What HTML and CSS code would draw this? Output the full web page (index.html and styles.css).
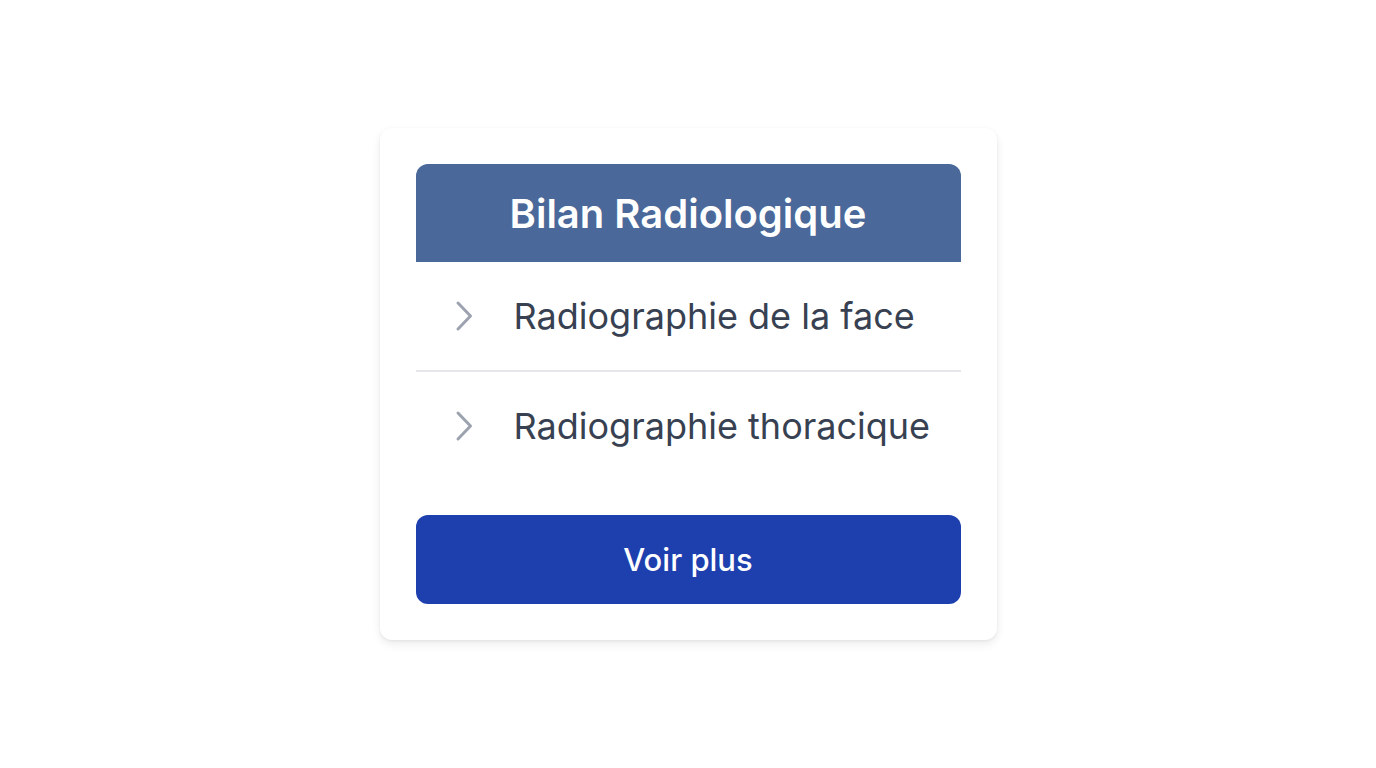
FILE: index.html
```html
<!DOCTYPE html>
<html lang="fr">
<head>
<meta charset="utf-8">
<title>Bilan Radiologique</title>
<link rel="stylesheet" href="styles.css">
</head>
<body>
<main class="page">
  <section class="card">
    <h2 class="card-header">Bilan Radiologique</h2>
    <ul class="list">
      <li class="item">
        <svg class="chev" viewBox="0 0 20 32" width="20" height="32"><path d="M4 3l12.5 13L4 29" fill="none" stroke="currentColor" stroke-width="3" stroke-linecap="round" stroke-linejoin="round"/></svg>
        <span>Radiographie de la face</span>
      </li>
      <li class="item">
        <svg class="chev" viewBox="0 0 20 32" width="20" height="32"><path d="M4 3l12.5 13L4 29" fill="none" stroke="currentColor" stroke-width="3" stroke-linecap="round" stroke-linejoin="round"/></svg>
        <span>Radiographie thoracique</span>
      </li>
    </ul>
    <button class="btn" type="button">Voir plus</button>
  </section>
</main>
</body>
</html>
```
FILE: styles.css
```css
* { box-sizing: border-box; }
html, body { margin: 0; padding: 0; background: #fff; }
body { font-family: Inter, "Noto Sans", sans-serif; }
.page {
  height: 768px;
  display: flex;
  align-items: center;
  justify-content: center;
}
.card {
  width: 617px;
  background: #fff;
  border-radius: 12px;
  padding: 36px;
  box-shadow: 0 4px 10px rgba(0,0,0,0.08), 0 1px 3px rgba(0,0,0,0.06);
  display: flex;
  flex-direction: column;
}
.card-header {
  margin: 0;
  height: 98px;
  background: #4a6899;
  color: #fff;
  border-radius: 12px 12px 0 0;
  font-size: 40px;
  font-weight: 600;
  display: flex;
  align-items: center;
  justify-content: center;
}
.list { list-style: none; margin: 0; padding: 0; }
.item {
  height: 108px;
  display: flex;
  align-items: center;
  padding-left: 38px;
  gap: 40px;
  color: #374151;
  font-size: 36px;
  font-weight: 400;
}
.item + .item { border-top: 2px solid #e5e7eb; height: 109px; }
.chev { color: #9ca3af; flex: none; }
.btn {
  margin-top: 36px;
  height: 89px;
  border: none;
  border-radius: 12px;
  background: #1e40af;
  color: #fff;
  font-family: inherit;
  font-size: 31px;
  font-weight: 500;
}
```
